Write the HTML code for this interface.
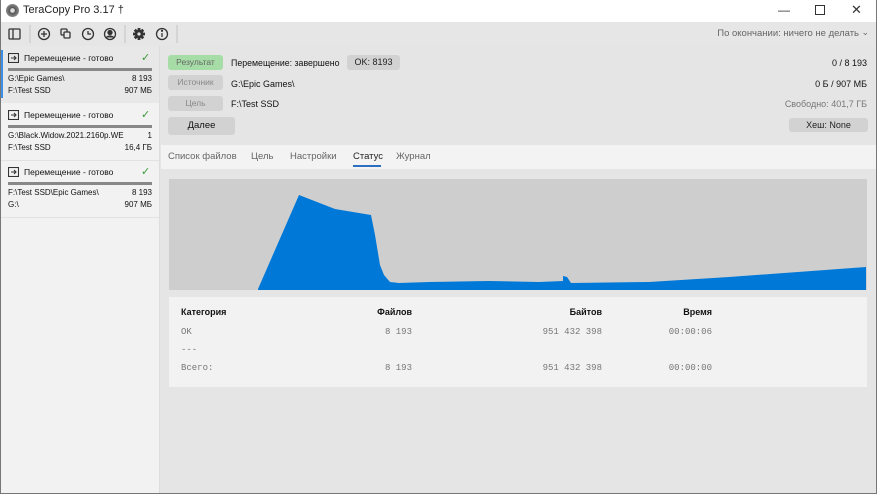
<!DOCTYPE html>
<html><head><meta charset="utf-8"><style>
*{margin:0;padding:0;box-sizing:border-box}
body{width:877px;height:494px;overflow:hidden;background:#e5e5e5;font-family:"Liberation Sans",sans-serif;font-size:8.5px;color:#111;position:relative}
.a{position:absolute;white-space:nowrap}
.mono{font-family:"Liberation Mono",monospace;color:#777;font-size:9px}
.btn{position:absolute;border-radius:3px;background:#d2d2d2;color:#888;text-align:center;font-size:8.5px}
.t{font-size:9.5px;color:#666;top:151px}
</style></head><body>
<div class="a" style="left:0;top:0;width:877px;height:22px;background:#fff"></div>
<div class="a" style="left:6px;top:4px;width:13px;height:13px;border-radius:50%;background:radial-gradient(circle,#ddd 20%,#555 30%,#888 70%,#444 100%)"></div>
<div class="a" style="left:23px;top:4px;font-size:11px;color:#222">TeraCopy Pro 3.17 †</div>
<div class="a" style="left:778px;top:3px;font-size:12px;color:#333">—</div>
<div class="a" style="left:815px;top:5px;width:10px;height:10px;border:1px solid #333"></div>
<div class="a" style="left:851px;top:2px;font-size:13px;color:#333">✕</div>
<div class="a" style="left:0;top:22px;width:877px;height:24px;background:#e6e6e6"></div>
<svg class="a" style="left:0;top:22px" width="180" height="24" fill="none" stroke="#333" stroke-width="1.3">
<rect x="9" y="7" width="11" height="10" rx="1"/><line x1="13" y1="7" x2="13" y2="17"/>
<line x1="30" y1="3" x2="30" y2="21" stroke="#ccc"/>
<circle cx="44" cy="12" r="5.5"/><line x1="41" y1="12" x2="47" y2="12"/><line x1="44" y1="9" x2="44" y2="15"/>
<rect x="61" y="7" width="6" height="6" rx="1"/><rect x="64" y="10" width="6" height="6" rx="1" fill="#e6e6e6"/>
<circle cx="88" cy="12" r="5.5"/><path d="M88 9v3h3"/>
<circle cx="110" cy="12" r="5.5"/><circle cx="110" cy="10.5" r="2" fill="#333"/><path d="M106 15.5q4-3 8 0" fill="#333"/>
<line x1="125" y1="3" x2="125" y2="21" stroke="#ccc"/>
<g fill="#333" stroke="none"><circle cx="139" cy="12" r="4.2"/>
<rect x="137.6" y="6" width="2.8" height="12"/><rect x="133" y="10.6" width="12" height="2.8"/>
<rect x="137.6" y="6" width="2.8" height="12" transform="rotate(45 139 12)"/><rect x="137.6" y="6" width="2.8" height="12" transform="rotate(-45 139 12)"/>
<circle cx="139" cy="12" r="1.6" fill="#e6e6e6"/></g>
<circle cx="162" cy="12" r="5.5"/><line x1="162" y1="11" x2="162" y2="15"/><circle cx="162" cy="8.8" r=".5" fill="#333"/>
<line x1="177" y1="3" x2="177" y2="21" stroke="#ccc"/>
</svg>
<div class="a" style="right:18px;top:28px;font-size:9.5px;color:#666">По окончании: ничего не делать</div>
<div class="a" style="right:8px;top:27px;font-size:9px;color:#666">⌄</div>
<div class="a" style="left:0;top:46px;width:160px;height:448px;background:#f2f2f2;border-right:1px solid #ddd"></div>
<div class="a" style="left:0;top:46px;width:159px;height:57px;background:#e8e8e8"></div>
<div class="a" style="left:0;top:50px;width:3px;height:48px;background:#3a8ee6"></div>
<div class="a" style="left:0;top:160px;width:159px;height:1px;background:#e2e2e2"></div>
<div class="a" style="left:0;top:217px;width:159px;height:1px;background:#e2e2e2"></div>

<svg class="a" style="left:8px;top:53px" width="11" height="10" fill="none" stroke="#333" stroke-width="1.1"><rect x=".5" y=".5" width="10" height="9"/><path d="M3 5h5M6 3l2 2-2 2"/></svg>
<div class="a" style="left:24px;top:53px">Перемещение - готово</div>
<div class="a" style="left:141px;top:51px;color:#3a9a3a;font-size:11px">✓</div>
<div class="a" style="left:8px;top:68px;width:144px;height:3px;background:#888"></div>
<div class="a" style="left:8px;top:74px;font-size:8px">G:\Epic Games\</div><div class="a" style="right:725px;top:74px;font-size:8px">8 193</div>
<div class="a" style="left:8px;top:86px;font-size:8px">F:\Test SSD</div><div class="a" style="right:725px;top:86px;font-size:8px">907 МБ</div>

<svg class="a" style="left:8px;top:110px" width="11" height="10" fill="none" stroke="#333" stroke-width="1.1"><rect x=".5" y=".5" width="10" height="9"/><path d="M3 5h5M6 3l2 2-2 2"/></svg>
<div class="a" style="left:24px;top:110px">Перемещение - готово</div>
<div class="a" style="left:141px;top:108px;color:#3a9a3a;font-size:11px">✓</div>
<div class="a" style="left:8px;top:125px;width:144px;height:3px;background:#888"></div>
<div class="a" style="left:8px;top:131px;font-size:8px">G:\Black.Widow.2021.2160p.WE</div><div class="a" style="right:725px;top:131px;font-size:8px">1</div>
<div class="a" style="left:8px;top:143px;font-size:8px">F:\Test SSD</div><div class="a" style="right:725px;top:143px;font-size:8px">16,4 ГБ</div>

<svg class="a" style="left:8px;top:167px" width="11" height="10" fill="none" stroke="#333" stroke-width="1.1"><rect x=".5" y=".5" width="10" height="9"/><path d="M3 5h5M6 3l2 2-2 2"/></svg>
<div class="a" style="left:24px;top:167px">Перемещение - готово</div>
<div class="a" style="left:141px;top:165px;color:#3a9a3a;font-size:11px">✓</div>
<div class="a" style="left:8px;top:182px;width:144px;height:3px;background:#888"></div>
<div class="a" style="left:8px;top:188px;font-size:8px">F:\Test SSD\Epic Games\</div><div class="a" style="right:725px;top:188px;font-size:8px">8 193</div>
<div class="a" style="left:8px;top:200px;font-size:8px">G:\</div><div class="a" style="right:725px;top:200px;font-size:8px">907 МБ</div>

<div class="btn" style="left:168px;top:55px;width:55px;height:15px;line-height:15px;background:#a6dca6;color:#666">Результат</div>
<div class="btn" style="left:168px;top:75px;width:55px;height:15px;line-height:15px">Источник</div>
<div class="btn" style="left:168px;top:96px;width:55px;height:15px;line-height:15px">Цель</div>
<div class="btn" style="left:168px;top:117px;width:67px;height:18px;line-height:18px;color:#111;font-size:9.5px">Далее</div>
<div class="a" style="left:231px;top:58px;font-size:8.8px">Перемещение: завершено</div>
<div class="btn" style="left:347px;top:55px;width:53px;height:15px;line-height:15px;color:#222;font-size:9px">OK: 8193</div>
<div class="a" style="left:231px;top:79px;font-size:9px">G:\Epic Games\</div>
<div class="a" style="left:231px;top:99px;font-size:9px">F:\Test SSD</div>
<div class="a" style="right:10px;top:58px;font-size:9px">0 / 8 193</div>
<div class="a" style="right:10px;top:79px;font-size:9px">0 Б / 907 МБ</div>
<div class="a" style="right:10px;top:99px;font-size:9px;color:#777">Свободно: 401,7 ГБ</div>
<div class="btn" style="left:789px;top:118px;width:79px;height:14px;line-height:14px;color:#222;font-size:9px">Хеш: None</div>

<div class="a" style="left:161px;top:145px;width:716px;height:24px;background:#f3f3f3"></div>
<div class="a t" style="left:168px">Список файлов</div>
<div class="a t" style="left:251px">Цель</div>
<div class="a t" style="left:290px">Настройки</div>
<div class="a t" style="left:353px;color:#222">Статус</div>
<div class="a" style="left:353px;top:165px;width:28px;height:2px;background:#2b6fc2"></div>
<div class="a t" style="left:396px">Журнал</div>

<svg class="a" style="left:169px;top:179px" width="698" height="111">
<rect width="698" height="111" fill="#cecece"/>
<path d="M89 110L130 16L166 30L202 36L206 56L211 86L215 96L221 103L230 104L260 103L320 102L370 103L394 102L394 97L398 98L402 104L480 103L560 98L697 88L697 111L89 111Z" fill="#0078d7"/>
</svg>
<div class="a" style="left:169px;top:297px;width:698px;height:90px;background:#f2f2f2"></div>
<div class="a" style="left:181px;top:307px;font-weight:bold;font-size:9px">Категория</div>
<div class="a" style="right:465px;top:307px;font-weight:bold;font-size:9px">Файлов</div>
<div class="a" style="right:275px;top:307px;font-weight:bold;font-size:9px">Байтов</div>
<div class="a" style="right:165px;top:307px;font-weight:bold;font-size:9px">Время</div>
<div class="a mono" style="left:181px;top:327px">OK</div>
<div class="a mono" style="right:465px;top:327px">8 193</div>
<div class="a mono" style="right:275px;top:327px">951 432 398</div>
<div class="a mono" style="right:165px;top:327px">00:00:06</div>
<div class="a mono" style="left:181px;top:345px">---</div>
<div class="a mono" style="left:181px;top:363px">Всего:</div>
<div class="a mono" style="right:465px;top:363px">8 193</div>
<div class="a mono" style="right:275px;top:363px">951 432 398</div>
<div class="a mono" style="right:165px;top:363px">00:00:00</div>
<div class="a" style="left:0;top:0;width:877px;height:494px;border:1px solid #777;border-top:none"></div>
</body></html>
